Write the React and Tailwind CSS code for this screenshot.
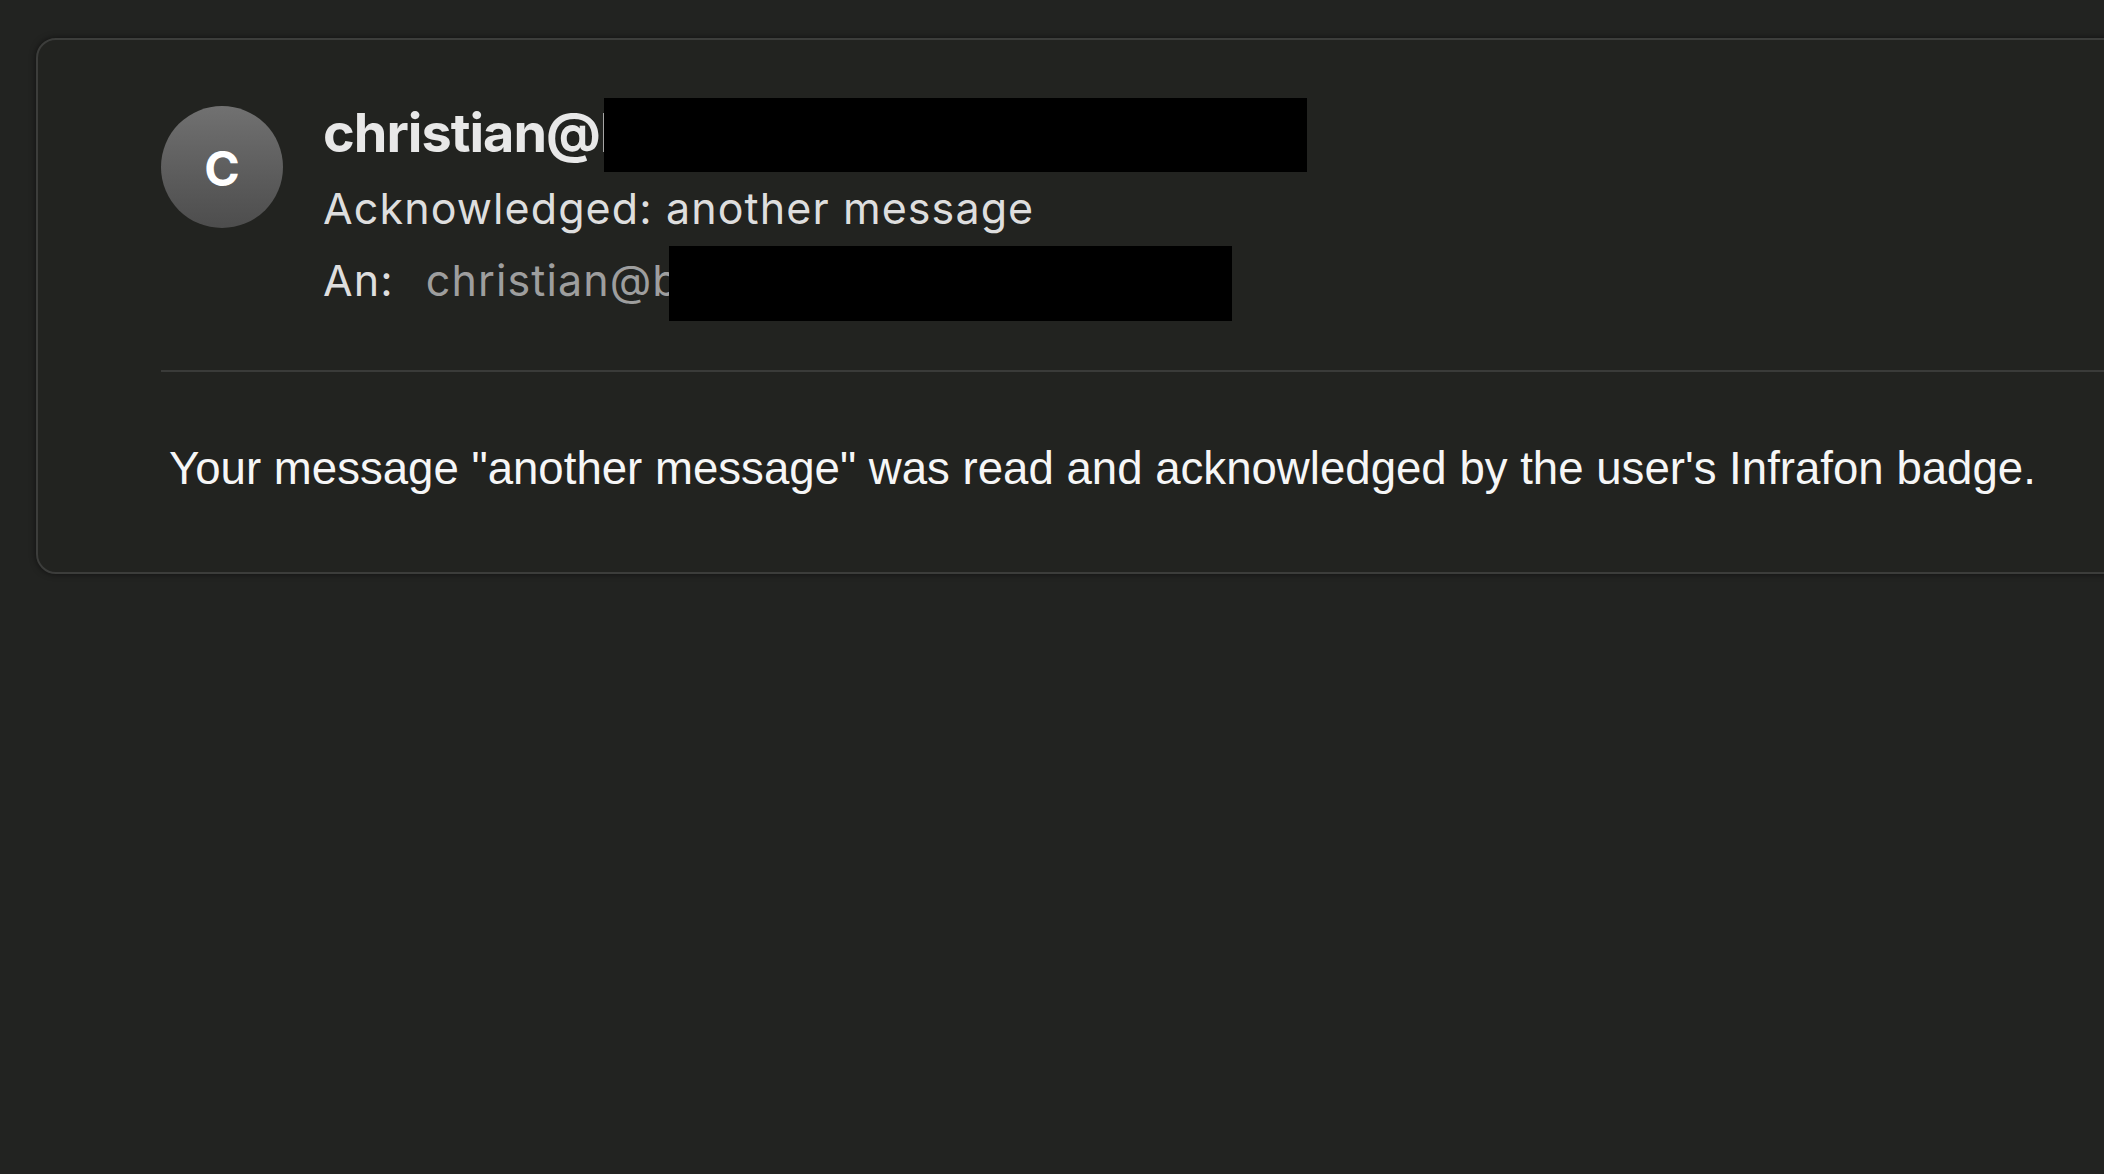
const sans = "font-['Inter','Liberation_Sans',sans-serif]";
const helv = "font-['Liberation_Sans','Arial',sans-serif]";

function Avatar({ letter }) {
  return (
    <div className="flex h-[122px] w-[122px] shrink-0 items-center justify-center rounded-full bg-gradient-to-b from-[#717171] to-[#4d4d4d]">
      <span className={`${sans} pt-[4px] text-[48px] leading-none font-bold text-white`}>{letter}</span>
    </div>
  );
}

// black bar drawn over the hidden part of an address
function Redacted({ className }) {
  return <span className={`relative inline-block bg-black ${className}`} />;
}

export default function App() {
  return (
    <div className="min-h-screen w-full overflow-hidden bg-[#222321] pt-[38px] pl-[36px]">
      <div className="w-[2200px] rounded-[20px] border-2 border-[#3c3d3b] bg-[#222320] pb-[77px] shadow-[0_0_6px_rgba(0,0,0,0.55)]">
        <div className="flex items-start pt-[66px] pl-[123px]">
          <Avatar letter="C" />
          <div className={`${sans} ml-[40px]`}>
            <div className="flex h-[54px] items-start">
              <span className="text-[54px] leading-[54px] font-bold tracking-[-1px] whitespace-nowrap text-[#e8e8e8]">
                christian@l
              </span>
              <Redacted className="-ml-[10px] mt-[-8px] h-[74px] w-[703px]" />
            </div>
            <div className="mt-[12px] text-[43px] leading-[72px] tracking-[1.1px] text-[#dedede]">
              Acknowledged: another message
            </div>
            <div className="flex h-[72px] items-center text-[43px] leading-[72px] tracking-[1.1px]">
              <span className="text-[#dedede]">An:</span>
              <span className="ml-[32px] text-[#9e9e9e]">christian@b</span>
              <Redacted className="-ml-[11px] mt-[6px] h-[75px] w-[563px]" />
            </div>
          </div>
        </div>
        <div className="mt-[54px] ml-[123px] h-[2px] bg-[#3a3b39]" />
        <p className={`${helv} mt-[71px] pl-[131px] text-[45.6px] leading-[52px] text-[#f6f6f6]`}>
          Your message "another message" was read and acknowledged by the user's Infrafon badge.
        </p>
      </div>
    </div>
  );
}
